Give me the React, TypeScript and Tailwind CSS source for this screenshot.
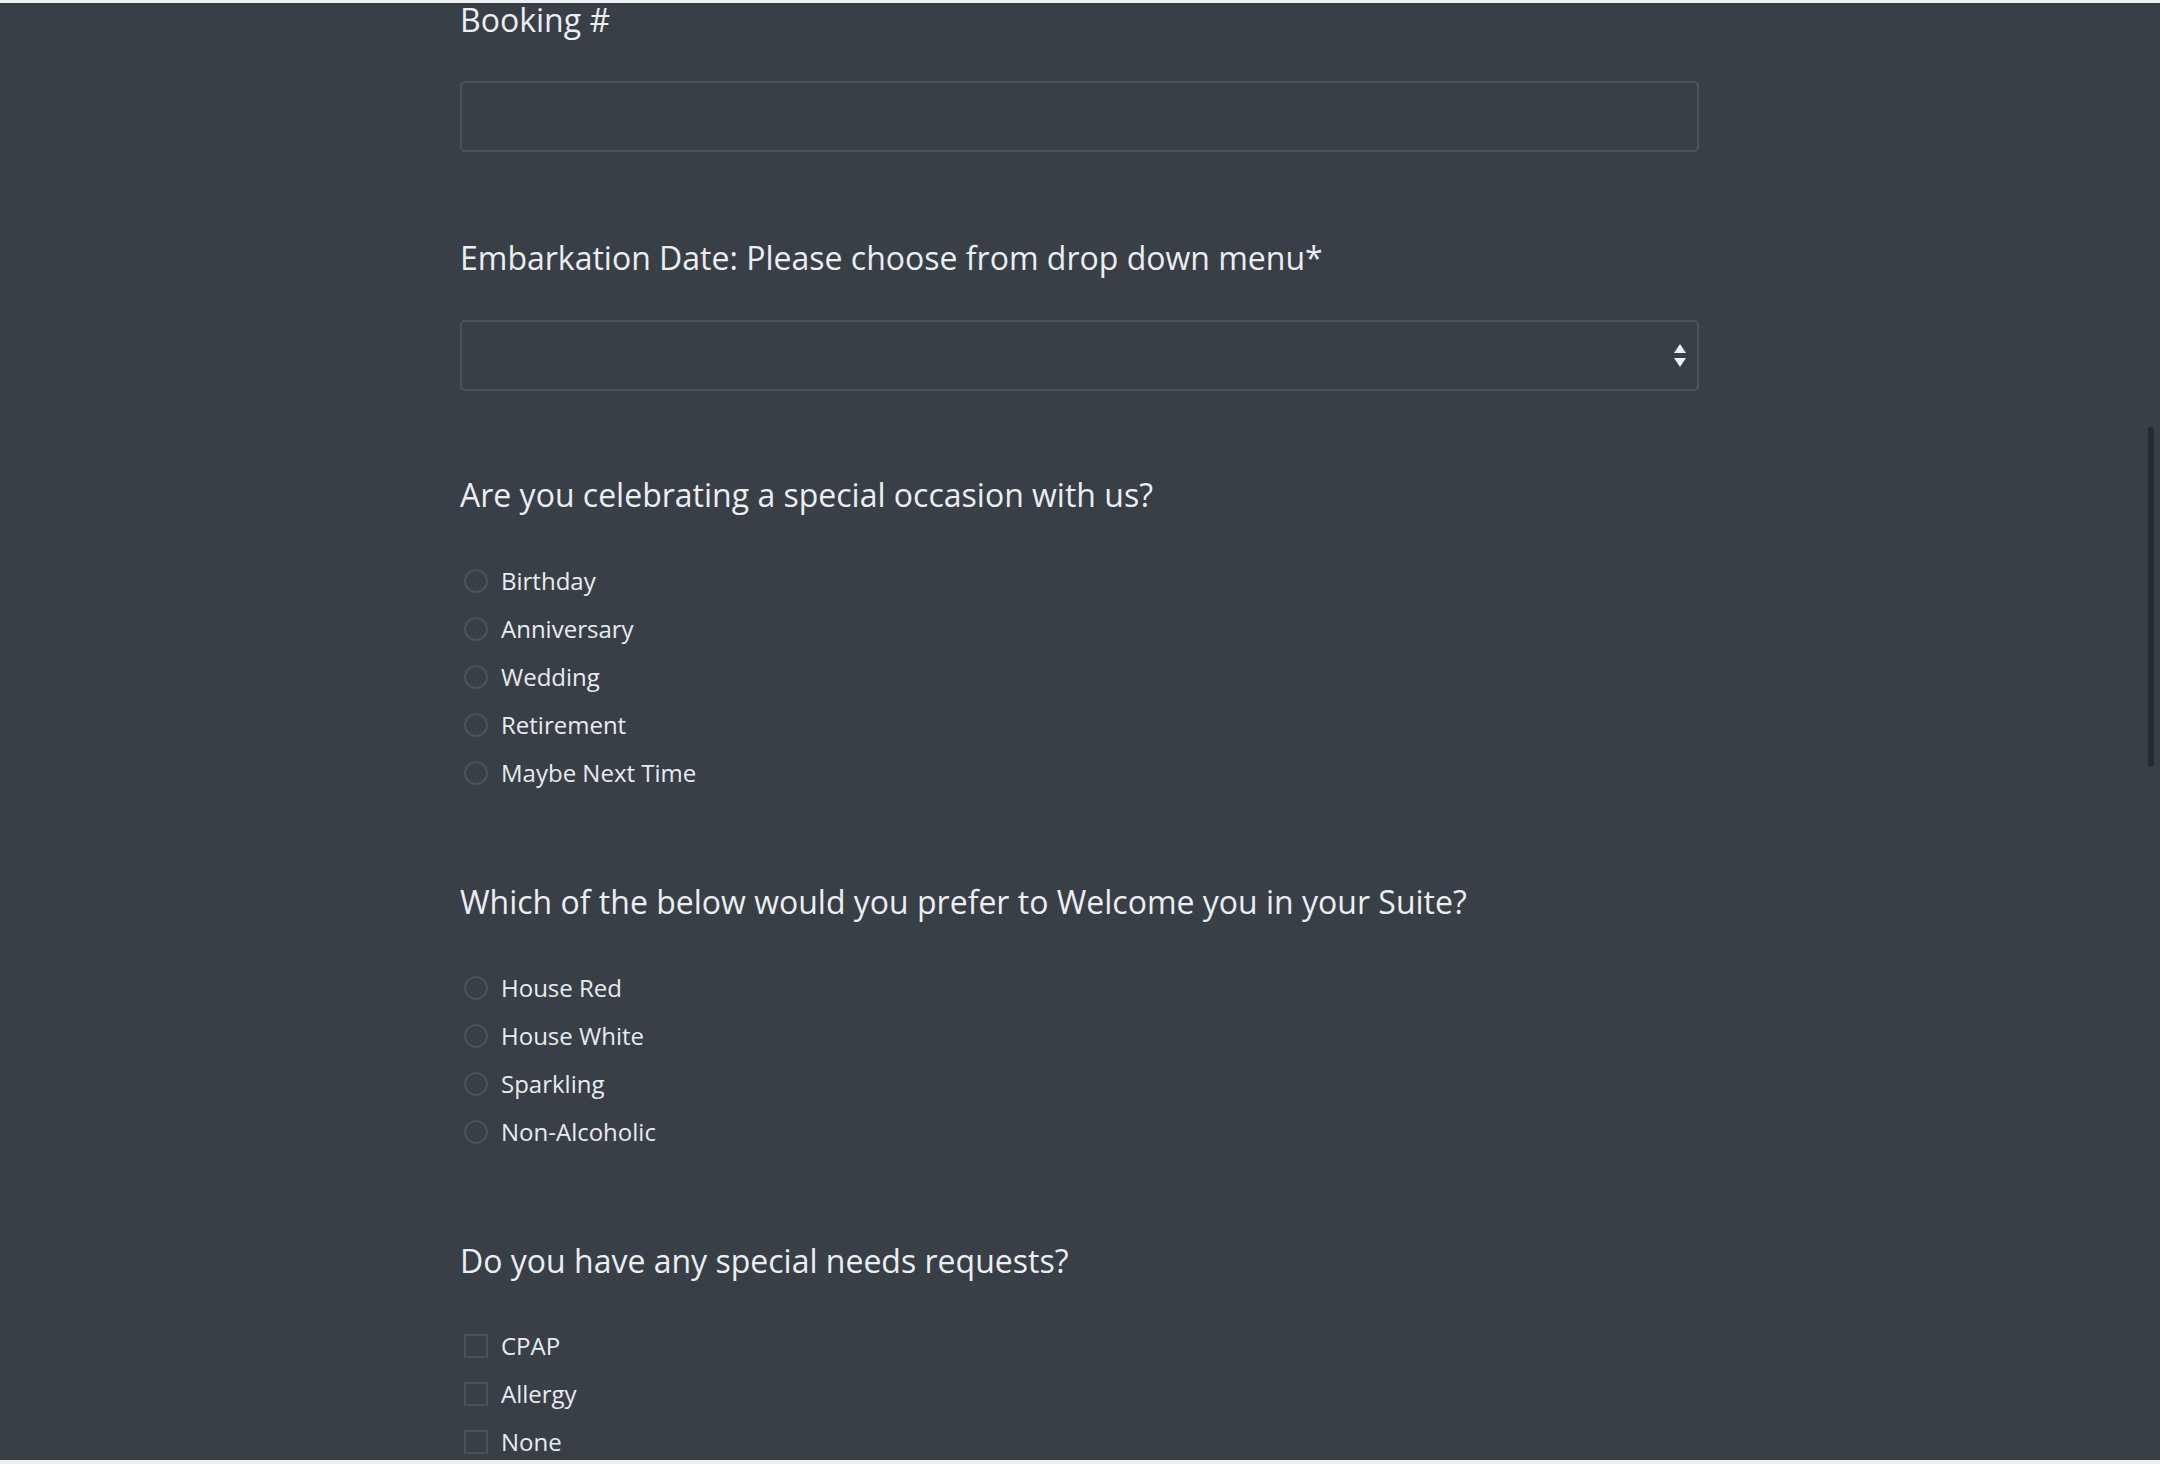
const occasions = ['Birthday', 'Anniversary', 'Wedding', 'Retirement', 'Maybe Next Time'];
const welcome = ['House Red', 'House White', 'Sparkling', 'Non-Alcoholic'];
const needs = ['CPAP', 'Allergy', 'None'];

function Radio({ label }: { label: string }) {
  return (
    <label className="flex h-[48px] items-center">
      <span className="ml-[4px] h-[24px] w-[24px] rounded-full border-2 border-[#4a525b]" />
      <span className="ml-[13px] text-[24px] text-[#e9ebee]">{label}</span>
    </label>
  );
}

function Checkbox({ label }: { label: string }) {
  return (
    <label className="flex h-[48px] items-center">
      <span className="ml-[4px] h-[24px] w-[24px] border-2 border-[#4a525b]" />
      <span className="ml-[13px] text-[24px] text-[#e9ebee]">{label}</span>
    </label>
  );
}

function Label({ children, className = '' }: { children: React.ReactNode; className?: string }) {
  return <h3 className={`h-[46px] text-[32px] leading-[46px] text-[#eceef0] ${className}`}>{children}</h3>;
}

export default function App() {
  return (
    <div
      className="relative h-[1464px] w-[2160px] overflow-hidden bg-[#383f47]"
      style={{ fontFamily: '"Open Sans", "Noto Sans", sans-serif' }}
    >
      <div className="h-[3px] bg-[#eef0f2]" />

      <form className="-mt-[1px] ml-[460px] w-[1239px]">
        {/* Booking number (page is scrolled, label sits right under the top edge) */}
        <h3 className="h-[36px] text-[32px] leading-[36px] text-[#eceef0]">Booking #</h3>
        <div className="mt-[43px] h-[71px] rounded-[5px] border-2 border-[#4a525b]" />

        {/* Embarkation date */}
        <Label className="mt-[83px]">Embarkation Date: Please choose from drop down menu*</Label>
        <div className="mt-[39px] flex h-[71px] items-center justify-end rounded-[5px] border-2 border-[#4a525b] pr-[11px]">
          <svg width="12" height="23" viewBox="0 0 12 23" fill="#eef0f2">
            <path d="M6 0 L12 9 L0 9 Z" />
            <path d="M0 14 L12 14 L6 23 Z" />
          </svg>
        </div>

        {/* Special occasion */}
        <Label className="mt-[81px]">Are you celebrating a special occasion with us?</Label>
        <div className="mt-[39px]">
          {occasions.map((o) => (
            <Radio key={o} label={o} />
          ))}
        </div>

        {/* Welcome gift */}
        <Label className="mt-[82px]">Which of the below would you prefer to Welcome you in your Suite?</Label>
        <div className="mt-[39px]">
          {welcome.map((o) => (
            <Radio key={o} label={o} />
          ))}
        </div>

        {/* Special needs */}
        <Label className="mt-[82px]">Do you have any special needs requests?</Label>
        <div className="mt-[38px]">
          {needs.map((o) => (
            <Checkbox key={o} label={o} />
          ))}
        </div>
      </form>

      {/* page scrollbar thumb */}
      <div className="absolute left-[2148px] top-[427px] h-[340px] w-[6px] rounded-[3px] bg-[#262b31]" />
      <div className="absolute bottom-0 left-0 h-[4px] w-full bg-[#eceff1]" />
    </div>
  );
}
